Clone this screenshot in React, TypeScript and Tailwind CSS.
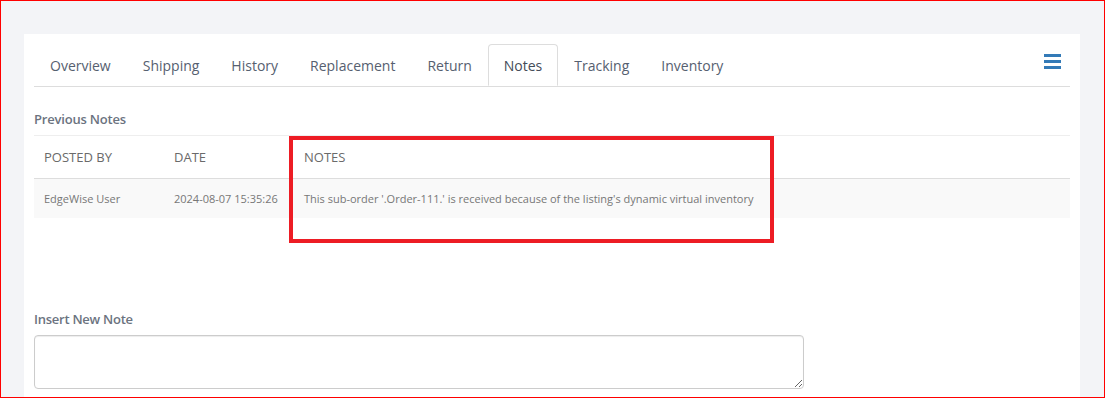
import React from "react";

const tabs = ["Overview", "Shipping", "History", "Replacement", "Return", "Notes", "Tracking", "Inventory"];

const App = () => {
  return (
    <div
      className="w-[1105px] h-[398px] overflow-hidden border border-[#ff0000] bg-[#f3f4f7] pt-[33px] pl-[23px] pr-[24px] relative"
      style={{ fontFamily: '"Open Sans", "Noto Sans", sans-serif' }}
    >
      <div className="bg-white h-full px-[10px] pt-[10px]">
        {/* tabs */}
        <div className="flex items-end border-b border-[#dddddd] relative">
          <ul className="flex">
            {tabs.map((t) => (
              <li
                key={t}
                className={
                  t === "Notes"
                    ? "px-[15px] h-[42px] flex items-center text-[14px] text-[#444c58] border border-[#dddddd] border-b-white rounded-t-[4px] -mb-px bg-white"
                    : "px-[16px] h-[42px] flex items-center text-[14px] text-[#566070]"
                }
              >
                {t}
              </li>
            ))}
          </ul>
          <button className="absolute right-[9px] top-[10px] flex flex-col gap-[3px] w-[17px]">
            <span className="block h-[3px] w-[17px] bg-[#337ab7]" />
            <span className="block h-[3px] w-[17px] bg-[#337ab7]" />
            <span className="block h-[3px] w-[17px] bg-[#337ab7]" />
          </button>
        </div>

        {/* previous notes */}
        <div className="mt-[23px] pb-[7px] border-b border-[#eeeeee] text-[13px] leading-[18px] font-semibold tracking-[-0.2px] text-[#6b7380]">
          Previous Notes
        </div>
        <table className="w-full border-collapse">
          <thead>
            <tr className="border-b border-[#dddddd]">
              <th className="w-[130px] text-left font-normal text-[13px] leading-[20px] text-[#6a6a6a] px-[10px] py-[11px]">POSTED BY</th>
              <th className="w-[130px] text-left font-normal text-[13px] leading-[20px] text-[#6a6a6a] px-[10px] py-[11px]">DATE</th>
              <th className="text-left font-normal text-[13px] leading-[20px] text-[#6a6a6a] px-[10px] py-[11px]">NOTES</th>
            </tr>
          </thead>
          <tbody>
            <tr className="bg-[#f9f9f9]">
              <td className="text-[11px] leading-[19px] text-[#777777] px-[10px] py-[10px]">EdgeWise User</td>
              <td className="text-[11px] leading-[19px] text-[#777777] px-[10px] py-[10px]">2024-08-07 15:35:26</td>
              <td className="text-[11px] leading-[19px] text-[#777777] px-[10px] py-[10px]">
                This sub-order '.Order-111.' is received because of the listing's dynamic virtual inventory
              </td>
            </tr>
          </tbody>
        </table>

        {/* insert new note */}
        <div className="mt-[92px] text-[13px] leading-[18px] font-semibold tracking-[-0.25px] text-[#6b7380]">Insert New Note</div>
        <textarea className="mt-[7px] block w-[770px] h-[54px] border border-[#cccccc] rounded-[4px] shadow-[inset_0_1px_1px_rgba(0,0,0,0.075)]" />
      </div>

      {/* annotation box */}
      <div className="absolute left-[288px] top-[135px] w-[485px] h-[107px] border-[4px] border-[#ed1c24]" />
    </div>
  );
};

export default App;
